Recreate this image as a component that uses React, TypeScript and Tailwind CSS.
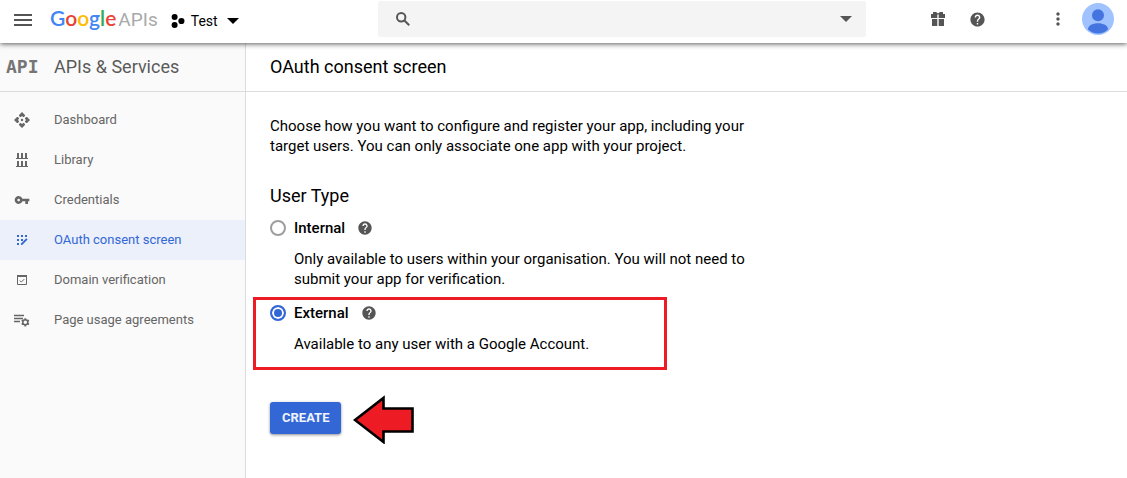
import { useState } from "react";
import type { ReactNode } from "react";
import { MdHelp, MdMoreVert, MdVpnKey } from "react-icons/md";

function MenuIcon() {
  return (
    <svg width="18" height="14" viewBox="0 0 18 14" fill="#555" aria-hidden="true">
      <path d="M0 2h18v2H0zM0 7h18v2H0zM0 12h18v2H0z" />
    </svg>
  );
}

function ProjectIcon() {
  return (
    <svg width="14" height="14" viewBox="0 0 14 14" fill="#000" aria-hidden="true">
      <circle cx="3.6" cy="3" r="3" />
      <circle cx="10.4" cy="7" r="3.1" />
      <circle cx="3.6" cy="11" r="3" />
    </svg>
  );
}

function Caret() {
  return (
    <svg width="12" height="6" viewBox="0 0 12 6" fill="currentColor" aria-hidden="true">
      <path d="M0 0h12L6 6z" />
    </svg>
  );
}

function SearchIcon() {
  return (
    <svg
      width="14"
      height="14"
      viewBox="0 0 14 14"
      fill="none"
      stroke="currentColor"
      strokeWidth="2"
      className="shrink-0"
      aria-hidden="true"
    >
      <circle cx="5.2" cy="5.2" r="4.2" />
      <path d="M8.200 8.200L13.200 13.200" />
    </svg>
  );
}

function GiftIcon() {
  return (
    <svg width="14" height="14" viewBox="0 0 14 14" fill="#555" aria-hidden="true">
      <path d="M2 0h3l2 1.6L9 0h3v2h2v4H7.7V2.4H6.3V6H0V2h2z" />
      <path d="M1 7h5.3v7H1zM7.7 7H13v7H7.7z" />
    </svg>
  );
}

function DashboardIcon() {
  return (
    <svg width="16" height="16" viewBox="0 0 16 16" fill="currentColor" aria-hidden="true">
      <path d="M8 0l3 3v1L9.500 5.200 8 4 6.500 5.200 5 4V3z" />
      <path d="M8 16l3-3v-1l-1.500-1.200L8 12l-1.500-1.200L5 12v1z" />
      <path d="M0 8l3-3h1l1.200 1.500L4 8l1.200 1.500L4 11H3z" />
      <path d="M16 8l-3-3h-1l-1.200 1.500L12 8l-1.200 1.500L12 11h1z" />
      <circle cx="8" cy="8" r="1.2" />
    </svg>
  );
}

function LibraryIcon() {
  return (
    <svg width="12" height="14" viewBox="0 0 12 14" fill="currentColor" aria-hidden="true">
      <path d="M1 0h2v5h2V0h2v5h2V0h2v5h1v1H0V5h1zM1 8h2v5h2V8h2v5h2V8h2v5h1v1H0v-1h1z" />
    </svg>
  );
}

function ConsentIcon() {
  return (
    <svg width="12" height="12" viewBox="0 0 12 12" fill="currentColor" aria-hidden="true">
      <path d="M1 1h2v2H1zM5 1h2v2H5zM9 1h2v2H9zM1 5h2v2H1zM5 5h2v2H5zM1 9h2v2H1z" />
      <path d="M5 9.500L10.300 4.200l1.300 1.300L6.100 11H5z" />
    </svg>
  );
}

function DomainIcon() {
  return (
    <svg width="10" height="10" viewBox="0 0 10 10" fill="none" stroke="currentColor" aria-hidden="true">
      <path d="M.5.5h9v9h-9z" />
      <path d="M0 1h10" strokeWidth="2" />
      <path d="M2.8 5.6l1.5 1.5 3-3" />
    </svg>
  );
}

function AgreementsIcon() {
  return (
    <svg width="16" height="13" viewBox="0 0 16 13" fill="none" stroke="currentColor" aria-hidden="true">
      <path d="M0 1.5h10M0 4.5h9M0 7.5h6" strokeWidth="1.3" />
      <circle cx="11.3" cy="8.3" r="2.5" strokeWidth="1.5" />
      <path
        d="M11.3 4.200v1.400M11.300 11v1.400M7.700 6.200l1.300.8M13.600 9.600l1.300.8M7.700 10.400l1.300-.8M13.600 7l1.300-.8"
        strokeWidth="1.8"
      />
    </svg>
  );
}

function Avatar() {
  return (
    <svg width="32" height="32" viewBox="0 0 32 32" aria-hidden="true">
      <circle cx="16" cy="16" r="16" fill="#a0c3ff" />
      <circle cx="16" cy="12.3" r="6" fill="#4374e0" />
      <path d="M6 26.400c0-4 4.500-6.200 10-6.200s10 2.200 10 6.200a14.500 14.500 0 0 1-20 0z" fill="#4374e0" />
    </svg>
  );
}

function PointerArrow() {
  return (
    <svg width="62" height="50" viewBox="0 0 62 50" aria-hidden="true">
      <path d="M2 26L30.500 4v10.500h29v23h-29V48z" fill="#ed1c24" stroke="#000" strokeWidth="2.6" />
    </svg>
  );
}

const navItems: { label: string; icon: ReactNode; active?: boolean }[] = [
  { label: "Dashboard", icon: <DashboardIcon /> },
  { label: "Library", icon: <LibraryIcon /> },
  { label: "Credentials", icon: <MdVpnKey size={16} /> },
  { label: "OAuth consent screen", icon: <ConsentIcon />, active: true },
  { label: "Domain verification", icon: <DomainIcon /> },
  { label: "Page usage agreements", icon: <AgreementsIcon /> },
];

function Header() {
  return (
    <header className="relative z-10 flex h-[43px] shrink-0 items-start bg-white pt-px pr-[13px] shadow-[0_1px_5px_rgba(0,0,0,0.65)]">
      <div className="flex h-9 w-[378px] shrink-0 items-center pl-[14px]">
        <button type="button" aria-label="Main menu">
          <MenuIcon />
        </button>
        <a href="#" className="ml-[18px] flex items-baseline leading-6">
          <span className="font-['Lato',sans-serif] text-[21px] font-semibold">
            <span className="text-[#4285f4]">G</span>
            <span className="text-[#ea4335]">o</span>
            <span className="text-[#fbbc05]">o</span>
            <span className="text-[#4285f4]">g</span>
            <span className="text-[#34a853]">l</span>
            <span className="text-[#ea4335]">e</span>
          </span>
          <span className="ml-[2px] text-[19px] text-[#a9a9a9]">APIs</span>
        </a>
        <button type="button" className="ml-[13px] flex items-center pt-1 text-[14px] leading-5 text-black">
          <ProjectIcon />
          <span className="ml-[6px]">Test</span>
          <span className="ml-[9px]">
            <Caret />
          </span>
        </button>
      </div>
      <div className="flex h-9 min-w-0 flex-1 items-center rounded-xs bg-[#f4f4f4] pr-[14px] pl-[18px] text-[#555]">
        <SearchIcon />
        <input aria-label="Search" className="h-full min-w-0 flex-1 bg-transparent px-3 text-[14px] outline-none" />
        <button type="button" aria-label="Search options">
          <Caret />
        </button>
      </div>
      <div className="flex h-9 shrink-0 items-center pl-[65px] text-[#555]">
        <button type="button" aria-label="Free trial">
          <GiftIcon />
        </button>
        <button type="button" aria-label="Help" className="ml-6">
          <MdHelp size={17} />
        </button>
        <button type="button" aria-label="More" className="ml-[62px]">
          <MdMoreVert size={20} />
        </button>
        <button type="button" aria-label="Account" className="ml-[14px]">
          <Avatar />
        </button>
      </div>
    </header>
  );
}

function Sidebar() {
  return (
    <aside className="w-[246px] shrink-0 border-r border-[#dcdcdc] bg-[#fafafa]">
      <div className="flex h-[49px] items-center border-b border-[#dcdcdc] pl-[6px]">
        <span className="w-12 shrink-0 font-['DejaVu_Sans_Mono',monospace] text-[18px] leading-6 font-bold text-[#757575]">
          API
        </span>
        <h2 className="text-[18px] leading-6 text-[#5a5a5a]">APIs &amp; Services</h2>
      </div>
      <nav className="pt-2">
        {navItems.map((item) => (
          <a
            key={item.label}
            href="#"
            aria-current={item.active ? "page" : undefined}
            className={
              item.active
                ? "flex h-10 items-center bg-[#ebf0fb] text-[13px] text-[#3367d6]"
                : "flex h-10 items-center text-[13px] text-[#666]"
            }
          >
            <span className="flex w-11 shrink-0 justify-center">{item.icon}</span>
            <span className="ml-[10px]">{item.label}</span>
          </a>
        ))}
      </nav>
    </aside>
  );
}

function UserTypeOption(props: {
  id: string;
  label: string;
  description: string;
  checked: boolean;
  onSelect: () => void;
}) {
  const { id, label, description, checked, onSelect } = props;
  return (
    <div>
      <div className="flex h-5 items-center">
        <input
          id={id}
          type="radio"
          name="user-type"
          checked={checked}
          onChange={onSelect}
          aria-describedby={`${id}-description`}
          className="size-4 shrink-0 appearance-none rounded-full border-2 border-[#9e9e9e] bg-white checked:border-[#3367d6] checked:bg-[#3367d6] checked:shadow-[inset_0_0_0_2px_#fff]"
        />
        <label htmlFor={id} className="ml-2 text-[15px] leading-5 font-medium">
          {label}
        </label>
        <button type="button" aria-label={`About ${label}`} className="ml-3 text-[#555]">
          <MdHelp size={16} />
        </button>
      </div>
      <p id={`${id}-description`} className="mt-[11px] pl-6 text-[15px] leading-5">
        {description}
      </p>
    </div>
  );
}

export default function App() {
  const [userType, setUserType] = useState("external");
  return (
    <div className="flex min-h-screen flex-col bg-white font-['Roboto',sans-serif] text-black">
      <Header />
      <div className="flex flex-1">
        <Sidebar />
        <main className="min-w-0 flex-1">
          <div className="flex h-[49px] items-center border-b border-[#dcdcdc] px-6">
            <h1 className="text-[18px] leading-6">OAuth consent screen</h1>
          </div>
          <div className="px-6 pt-6 pb-6">
            <p className="max-w-[490px] text-[15px] leading-5">
              Choose how you want to configure and register your app, including your target users. You can
              only associate one app with your project.
            </p>
            <h2 className="mt-7 text-[18px] leading-6">User Type</h2>
            <div className="mt-[10px] max-w-[490px]">
              <UserTypeOption
                id="internal"
                label="Internal"
                description="Only available to users within your organisation. You will not need to submit your app for verification."
                checked={userType === "internal"}
                onSelect={() => setUserType("internal")}
              />
            </div>
            <div className="mt-2 -ml-[17px] max-w-[414px] border-3 border-[#ed1c24] pt-[3px] pb-[13px] pl-[14px]">
              <UserTypeOption
                id="external"
                label="External"
                description="Available to any user with a Google Account."
                checked={userType === "external"}
                onSelect={() => setUserType("external")}
              />
            </div>
            <div className="mt-6 flex items-start">
              <button
                type="button"
                className="mt-2 h-8 rounded-[3px] bg-[#3367d6] px-3 text-[13px] font-bold text-[#f0f4fc] shadow-[0_1px_3px_rgba(0,0,0,0.45)]"
              >
                CREATE
              </button>
              <span className="ml-3">
                <PointerArrow />
              </span>
            </div>
          </div>
        </main>
      </div>
    </div>
  );
}
